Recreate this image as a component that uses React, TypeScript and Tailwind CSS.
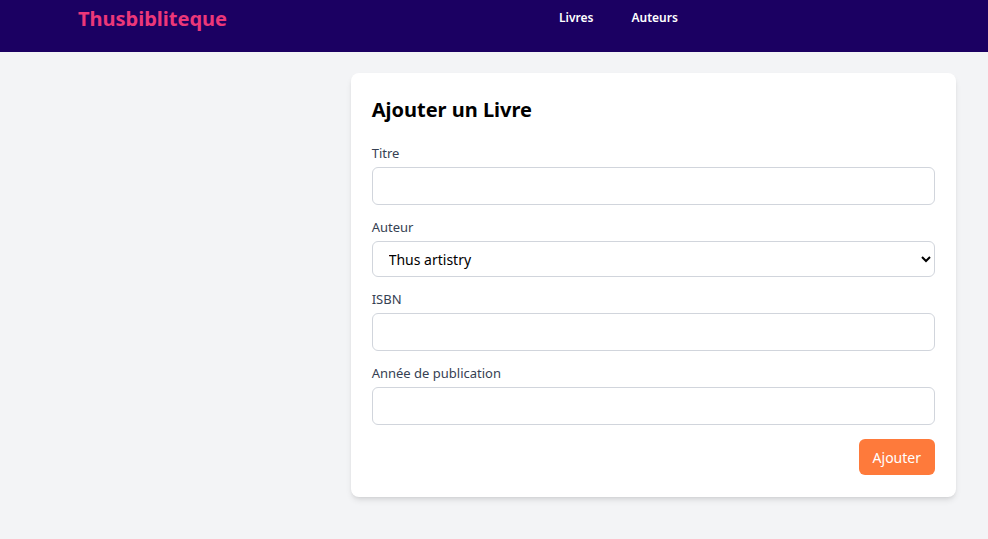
import React from 'react';

const App: React.FC = () => {
  return (
    <div className="min-h-screen bg-gray-100" style={{ fontFamily: '"Noto Sans", sans-serif' }}>
      <nav className="h-[52px] bg-[#1b0062] flex items-start px-[78px] pt-[5px]">
        <a className="text-[20px] leading-7 font-bold text-[#ec3779]" href="#">Thusbibliteque</a>
        <div className="flex gap-[38px] ml-[332px] pt-[4px]">
          <a className="text-[12px] font-semibold text-white" href="#">Livres</a>
          <a className="text-[12px] font-semibold text-white" href="#">Auteurs</a>
        </div>
      </nav>

      <main className="grid grid-cols-3 gap-8 px-8 py-[21px]">
        <div></div>
        <div className="col-span-2 bg-white rounded-lg shadow-md p-[21px] pb-[22px]">
          <h1 className="text-[20px] leading-8 font-bold text-black mb-[17px]">Ajouter un Livre</h1>
          <form className="flex flex-col gap-3" onSubmit={(e) => e.preventDefault()}>
            <div>
              <label className="block text-[13px] leading-5 text-gray-700 mb-1" htmlFor="titre">Titre</label>
              <input className="w-full h-[38px] px-3 border border-gray-300 rounded-md bg-white focus:outline-none" type="text" id="titre" />
            </div>
            <div>
              <label className="block text-[13px] leading-5 text-gray-700 mb-1" htmlFor="auteur">Auteur</label>
              <select className="w-full h-9 px-3 border border-gray-300 rounded-md bg-white text-[14px] text-black focus:outline-none" id="auteur">
                <option>Thus artistry</option>
              </select>
            </div>
            <div>
              <label className="block text-[13px] leading-5 text-gray-700 mb-1" htmlFor="isbn">ISBN</label>
              <input className="w-full h-[38px] px-3 border border-gray-300 rounded-md bg-white focus:outline-none" type="text" id="isbn" />
            </div>
            <div>
              <label className="block text-[13px] leading-5 text-gray-700 mb-1" htmlFor="annee">Année de publication</label>
              <input className="w-full h-[38px] px-3 border border-gray-300 rounded-md bg-white focus:outline-none" type="number" id="annee" />
            </div>
            <div className="flex justify-end mt-[2px]">
              <button className="h-9 px-[14px] bg-[#fe7a3b] text-white text-[14px] rounded-md" type="submit">Ajouter</button>
            </div>
          </form>
        </div>
      </main>
    </div>
  );
};

export default App;
